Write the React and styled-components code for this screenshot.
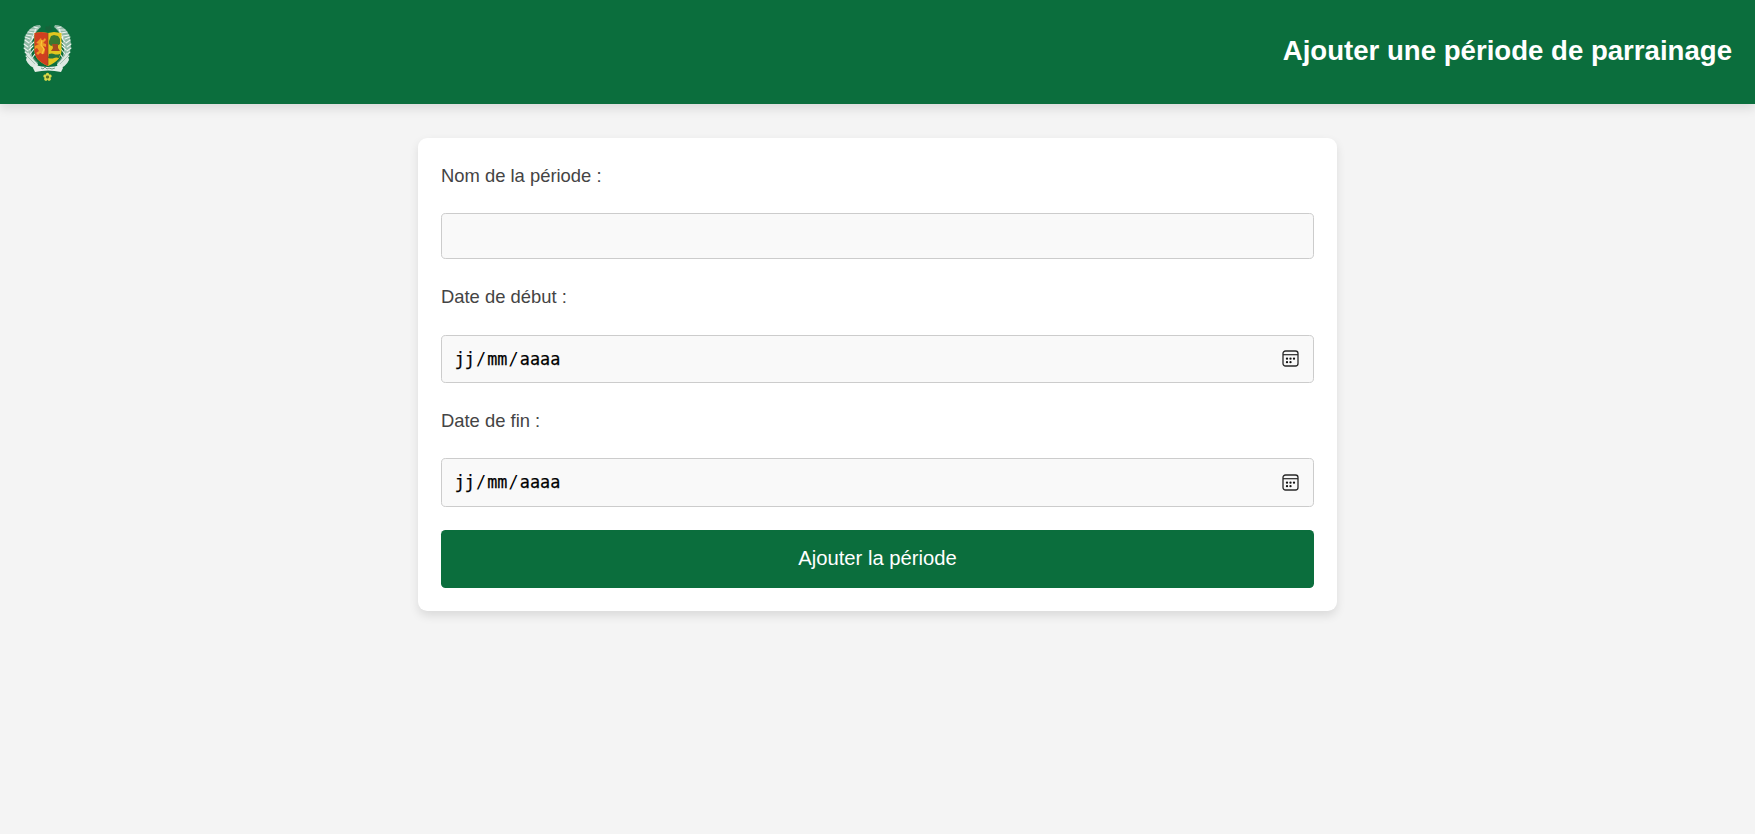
import React from 'react';
import styled, { createGlobalStyle } from 'styled-components';

const GlobalStyle = createGlobalStyle`
  * { box-sizing: border-box; }
  body {
    margin: 0;
    background: #f4f4f4;
    color: #444;
    font-family: "Liberation Sans", Arial, sans-serif;
    font-size: 18.4px;
    line-height: 29.44px;
  }
`;

const Page = styled.div`
  display: flex;
  flex-direction: column;
  min-height: 100vh;
`;

const Header = styled.header`
  display: flex;
  align-items: center;
  justify-content: space-between;
  height: 104px;
  padding: 0 23px;
  background: #0b6e3d;
  box-shadow: 0 4.6px 9.2px rgba(0, 0, 0, 0.1);
`;

const Logo = styled.svg`
  display: block;
  width: 50px;
  height: 58px;
`;

const Title = styled.h1`
  margin: 0;
  padding-bottom: 2px;
  color: #fff;
  font-size: 27.6px;
  line-height: 44px;
  font-weight: 700;
`;

const Form = styled.form`
  display: flex;
  flex-direction: column;
  gap: 23px;
  width: 919px;
  margin: 34px auto 0;
  padding: 23px;
  background: #fff;
  border-radius: 9.2px;
  box-shadow: 0 4.6px 9.2px rgba(0, 0, 0, 0.1);
`;

const Label = styled.label`
  display: block;
`;

const fieldBox = `
  width: 100%;
  padding: 0 13px;
  border: 1px solid #ccc;
  border-radius: 4.6px;
  background: #f9f9f9;
`;

const TextInput = styled.input`
  ${fieldBox}
  height: 46px;
  font: inherit;
  outline: none;
`;

const DateField = styled.div`
  ${fieldBox}
  display: flex;
  align-items: center;
  justify-content: space-between;
  height: 48.1px;
  padding: 0 14.5px 0 11.5px;
`;

const DateText = styled.span`
  display: flex;
  padding-top: 1px;
  color: #000;
  font-family: "DejaVu Sans Mono", monospace;
  font-size: 16.8px;
`;

const DatePart = styled.span`
  padding: 0 1.15px;
  -webkit-text-stroke: 0.25px #000;
`;

const CalendarSvg = styled.svg`
  display: block;
  width: 17px;
  height: 17px;
`;

const SubmitButton = styled.button`
  height: 58.5px;
  border: 0;
  border-radius: 4.6px;
  background: #0b6e3d;
  color: #fff;
  font-family: inherit;
  font-size: 20.24px;
`;

const barbs = [
  'M15 5l-4-1', 'M13 7l-6 0', 'M11 10l-6-1', 'M9 13l-6-1', 'M7 16l-5-2',
  'M6 20l-4-3', 'M5 24l-4-3', 'M5 28l-4-3', 'M6 32l-4-3', 'M8 36l-5-3',
  'M11 11l2-5', 'M9 15l3-5', 'M7 19l4-5', 'M7 23l4-4', 'M6 27l4-4',
  'M7 31l4-5', 'M9 35l3-4',
];

const petals = [0, 72, 144, 216, 288];

function Branch() {
  return (
    <g>
      <path d="M17 2C8 2 3 9 1.5 17C0 26 3 37 12 43l2-3C8 34 7 27 9 20C10 13 13 8 18 4z" fill="#a9c7b7" opacity="0.85" />
      <path d={barbs.join('')} stroke="#eef4f0" strokeWidth="1.1" strokeLinecap="round" />
      <path d="M5 29q3 6 10 12l-1 5q-8-2-11-9z" fill="#dde8e2" />
      <path d="M4 33l8 8M8 32l7 8" stroke="#86ab97" strokeWidth=".6" />
    </g>
  );
}

function CoatOfArms() {
  return (
    <Logo viewBox="0 0 50 58" role="img" aria-label="Armoiries du Sénégal">
      <Branch />
      <g transform="translate(49 0) scale(-1 1)"><Branch /></g>
      <path d="M22 6l1-3 2 1 2-2 1 3 2 1-5 2z" fill="#17633a" />
      <path d="M11.5 10l6.5-1 7 1 6-1 7.5 1v17c0 7-4 12-13.5 16-9.5-4-13.5-9-13.5-16z" fill="#e3c61f" />
      <path d="M11.5 10l6.5-1 7 1v33c-9.5-4-13.5-9-13.5-16z" fill="#cf3f20" />
      <path d="M16 17l2-2 1 3 3-3 1 2-3 3 3 1v3l-3-1 2 4-1 4-4-1-2 2-2-2 3-2-2-3-2 1v-3l4-2-3-1z" fill="#ee9a25" />
      <path d="M19 17l-1 5 3 4-2 5" fill="none" stroke="#f7c837" strokeWidth="1.2" />
      <path d="M26 18l2-5 3-1 4 1 2 3v5l-3 2-3-1-3 1-2-2z" fill="#3d7830" />
      <path d="M29 21h6v4l2 3h-9l2-3z" fill="#a54b20" />
      <path d="M26 31q3-1 5 0t6 0v1l-1 3q-3-1-5 0t-6 0z" fill="#26743d" />
      <path d="M25 10v32" stroke="#8b471f" strokeWidth=".7" />
      <path d="M12 42q13 4 26 0l2 3-2 4q-13-3-26 0l-2-4z" fill="#e5ede8" />
      <path d="M18 45l2 1 2-2 2 2 2-1 3 1 3-1" fill="none" stroke="#769a86" strokeWidth="1" />
      <g transform="translate(24.5 54)" fill="#d8d94a">
        {petals.map((angle) => (
          <circle key={angle} cy="-2.6" r="1.7" transform={`rotate(${angle})`} />
        ))}
        <circle r="1.6" fill="#596f22" />
      </g>
    </Logo>
  );
}

function CalendarIcon() {
  return (
    <CalendarSvg viewBox="0 0 17 17" aria-hidden="true">
      <rect x="1" y="1" width="15" height="15" rx="2.5" fill="none" stroke="#282828" strokeWidth="1.3" />
      <path d="M1 4.7h15" stroke="#282828" strokeWidth="1.2" />
      <g fill="#111">
        <circle cx="5" cy="8.7" r="1.15" />
        <circle cx="8.5" cy="8.7" r="1.15" />
        <circle cx="12" cy="8.7" r="1.15" />
        <circle cx="5" cy="12.2" r="1.15" />
        <circle cx="8.5" cy="12.2" r="1.15" />
      </g>
    </CalendarSvg>
  );
}

function DateInput() {
  return (
    <DateField>
      <DateText>
        <DatePart>jj</DatePart>/<DatePart>mm</DatePart>/<DatePart>aaaa</DatePart>
      </DateText>
      <CalendarIcon />
    </DateField>
  );
}

export default function App() {
  return (
    <Page>
      <GlobalStyle />
      <Header>
        <CoatOfArms />
        <Title>Ajouter une période de parrainage</Title>
      </Header>
      <Form>
        <Label htmlFor="nom">Nom de la période :</Label>
        <TextInput id="nom" type="text" />
        <Label>Date de début :</Label>
        <DateInput />
        <Label>Date de fin :</Label>
        <DateInput />
        <SubmitButton type="button">Ajouter la période</SubmitButton>
      </Form>
    </Page>
  );
}
